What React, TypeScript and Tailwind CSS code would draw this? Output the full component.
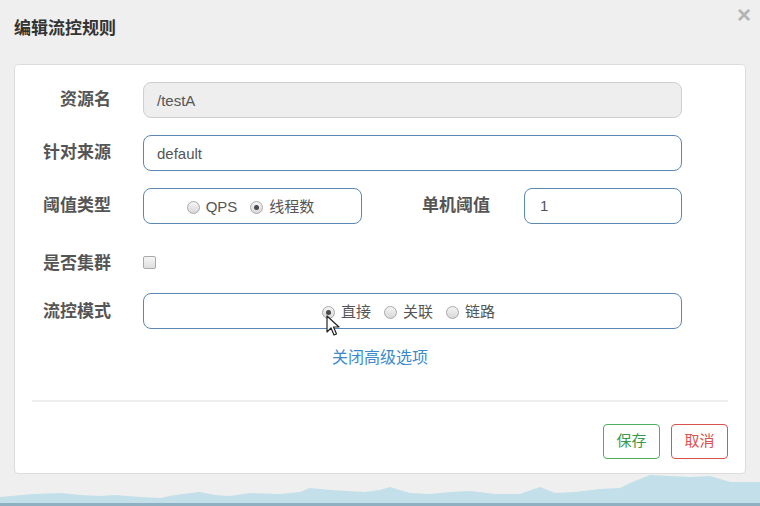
import type { ReactNode } from "react";

const font = { fontFamily: '"Liberation Sans", Arial, "Noto Sans CJK SC", sans-serif' };

function Radio({ checked, label }: { checked?: boolean; label: string }) {
  return (
    <label className="flex items-center gap-[6px]">
      <span className="grid h-[13px] w-[13px] place-items-center rounded-full border border-[#a9a9a9] bg-gradient-to-b from-[#f4f4f4] to-[#d8d8d8]">
        {checked && <span className="h-[5px] w-[5px] rounded-full bg-[#4a4a4a]" />}
      </span>
      <span className="text-[15px] text-[#555]">{label}</span>
    </label>
  );
}

function Row({ label, labelClass = "", children }: { label: string; labelClass?: string; children: ReactNode }) {
  return (
    <div className="flex h-[36px] items-center">
      <div className={"w-[96px] text-right text-[17px] font-bold text-[#555] " + labelClass}>{label}</div>
      <div className="ml-[32px] flex h-full items-center">{children}</div>
    </div>
  );
}

export default function App() {
  return (
    <div className="relative h-[506px] w-[760px] overflow-hidden bg-[#efefef]" style={font}>
      {/* Header */}
      <div className="flex h-[58px] items-center justify-between px-[14px]">
        <h3 className="text-[17px] font-bold text-[#333]">编辑流控规则</h3>
      </div>
      <button className="absolute right-[9px] top-[3px] text-[24px] font-bold leading-none text-[#b4b4b4]">
        ×
      </button>

      {/* Body */}
      <div className="relative z-10 mx-[14px] mt-[6px] flex h-[410px] w-[732px] flex-col rounded-[4px] border border-[#dcdcdc] bg-white">
        <div className="flex flex-col gap-[17px] pt-[17px]">
          <Row label="资源名">
            <div className="flex h-[36px] w-[539px] items-center rounded-[8px] border border-[#cfcfcf] bg-[#eeeeee] px-[13px] pt-[2px] text-[15px] text-[#555]">
              /testA
            </div>
          </Row>
          <Row label="针对来源">
            <div className="flex h-[36px] w-[539px] items-center rounded-[8px] border border-[#5b87b3] px-[13px] pt-[2px] text-[15px] text-[#555]">
              default
            </div>
          </Row>
          <Row label="阈值类型">
            <div className="flex h-[36px] w-[219px] items-center justify-center gap-[13px] rounded-[8px] border border-[#5b87b3] pt-[3px] pr-[4px]">
              <Radio label="QPS" />
              <Radio checked label="线程数" />
            </div>
            <div className="w-[128px] text-right text-[17px] font-bold text-[#555]">单机阈值</div>
            <div className="ml-[34px] flex h-[36px] w-[158px] items-center rounded-[8px] border border-[#5b87b3] px-[15px] text-[15px] text-[#555]">
              1
            </div>
          </Row>
          <Row label="是否集群" labelClass="mt-[9px]">
            <span className="mt-[6px] block h-[13px] w-[13px] rounded-[2px] border border-[#a9a9a9] bg-gradient-to-b from-[#f6f6f6] to-[#dedede]" />
          </Row>
          <Row label="流控模式">
            <div className="-mt-[2px] flex h-[36px] w-[539px] items-center justify-center gap-[13px] rounded-[8px] border border-[#5b87b3] pt-[3px] pr-[8px]">
              <Radio checked label="直接" />
              <Radio label="关联" />
              <Radio label="链路" />
            </div>
          </Row>
        </div>

        <div className="mt-[16px] text-center text-[16px] text-[#3d8acb]">关闭高级选项</div>

        <div className="mx-[17px] mt-[30px] h-[2px] bg-[#eeeeee]" />

        <div className="mt-[22px] flex justify-end gap-[11px] pr-[17px]">
          <button className="h-[35px] w-[57px] rounded-[4px] border border-[#4fae5f] bg-white text-[15px] text-[#3a9a4c]">
            保存
          </button>
          <button className="h-[35px] w-[57px] rounded-[4px] border border-[#d9534f] bg-white text-[15px] text-[#d9534f]">
            取消
          </button>
        </div>
      </div>

      {/* Mouse pointer */}
      <svg className="absolute left-[326px] top-[315px] z-20" width="14" height="22" viewBox="0 0 14 22">
        <path
          d="M1 1 L1 17 L5 13 L8 20 L10.5 19 L7.5 12 L13 12 Z"
          fill="#fff"
          stroke="#222"
          strokeWidth="1.2"
          strokeLinejoin="round"
        />
      </svg>

      {/* Bottom landscape */}
      <svg className="absolute bottom-0 left-0" width="760" height="36" viewBox="0 470 760 36">
        <path
          d="M0 497 L33 494 L60 493 L80 495 L100 496 L115 495 L140 497 L160 498 L175 495 L200 492 L215 495 L230 496 L250 493 L280 494 L300 492 L310 488 L330 490 L365 492 L380 490 L390 487 L410 493 L430 494 L450 492 L470 491 L495 494 L520 494 L540 487 L555 493 L575 492 L600 489 L620 488 L630 483 L650 475 L690 477 L710 476 L730 482 L760 482 L760 506 L0 506 Z"
          fill="#c2dfea"
        />
        <rect x="0" y="503" width="760" height="3" fill="#8fb0c0" />
      </svg>
    </div>
  );
}
